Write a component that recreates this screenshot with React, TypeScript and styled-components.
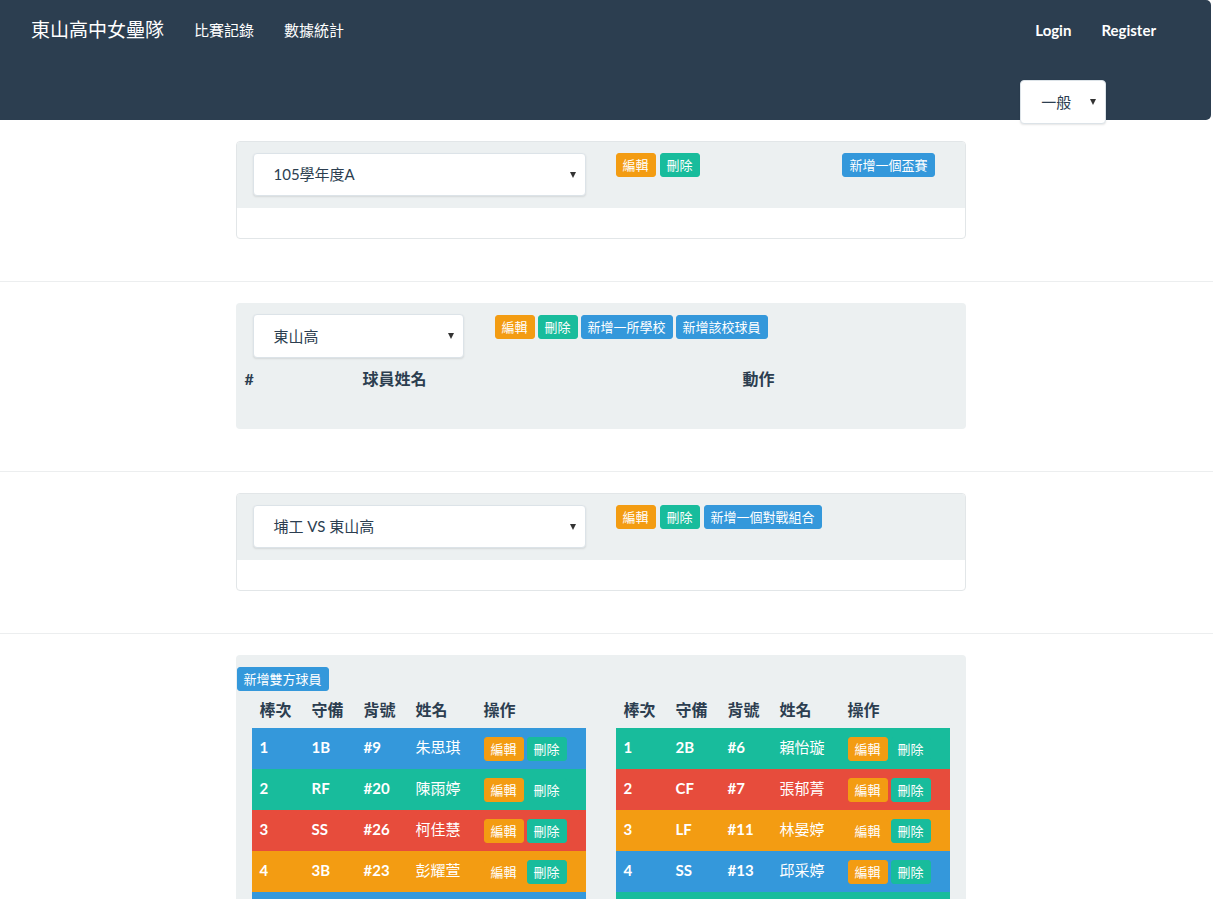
import React from "react";
import styled, { createGlobalStyle } from "styled-components";

const GlobalStyle = createGlobalStyle`
  html, body { margin: 0; padding: 0; background: #ffffff; }
  body {
    font-family: Lato, "Noto Sans CJK TC", sans-serif;
    font-size: 15px;
    line-height: 21px;
    color: #2c3e50;
  }
  * { box-sizing: border-box; }
`;

const CJK = `Lato, "Noto Sans CJK TC", sans-serif`;

const colors = {
  warning: "#f39c12",
  success: "#18bc9c",
  info: "#3498db",
  danger: "#e74c3c",
};

/* ---------- Navbar ---------- */
const Navbar = styled.nav`
  height: 120px;
  margin-right: 2px;
  background: #2c3e50;
  border-radius: 0 5px 5px 0;
  display: flex;
  justify-content: space-between;
  padding: 0 40px 0 16px;
  position: relative;
  z-index: 2;
`;

const NavLeft = styled.div`
  display: flex;
  align-items: center;
  height: 60px;
`;

const Brand = styled.a`
  padding: 0 15px;
  font-family: ${CJK};
  font-size: 19px;
  line-height: 60px;
  color: #ffffff;
  text-decoration: none;
`;

const NavLink = styled.a<{ $bold?: boolean }>`
  padding: 0 15px;
  font-family: ${CJK};
  font-size: 15px;
  line-height: 60px;
  color: #ffffff;
  text-decoration: none;
  font-weight: ${(p) => (p.$bold ? 700 : 400)};
`;

const NavRight = styled.div`
  display: flex;
  flex-direction: column;
  align-items: flex-start;
`;

const NavLinks = styled.div`
  display: flex;
  align-items: center;
  height: 60px;
`;

/* ---------- Select ---------- */
const SelectBox = styled.div<{ $w: number; $h?: number; $top?: number }>`
  width: ${(p) => p.$w}px;
  height: ${(p) => p.$h ?? 43}px;
  margin-top: ${(p) => p.$top ?? 0}px;
  flex-shrink: 0;
  background: #ffffff;
  border: 1px solid #dce3e8;
  border-radius: 4px;
  box-shadow: 0 1px 2px rgba(0, 0, 0, 0.1);
  display: flex;
  align-items: center;
  justify-content: space-between;
  padding: 0 9px 0 20px;
  font-family: ${CJK};
  font-size: 15px;
  color: #2c3e50;
`;

const Caret = styled.span`
  width: 0;
  height: 0;
  border-left: 3.5px solid transparent;
  border-right: 3.5px solid transparent;
  border-top: 6px solid #333333;
`;

/* ---------- Buttons ---------- */
const Btn = styled.button<{ $variant: keyof typeof colors }>`
  height: 24px;
  padding: 1px 6px;
  border: 1px solid ${(p) => colors[p.$variant]};
  border-radius: 3px;
  background: ${(p) => colors[p.$variant]};
  color: #ffffff;
  font-family: "Noto Sans CJK TC", sans-serif;
  font-size: 13px;
  line-height: 20px;
  white-space: nowrap;
  cursor: pointer;
`;

const BtnGroup = styled.div<{ $left: number; $top?: number; $gap?: number }>`
  display: flex;
  gap: ${(p) => p.$gap ?? 4}px;
  margin-left: ${(p) => p.$left}px;
  margin-top: ${(p) => p.$top ?? 0}px;
`;

const RightBtn = styled.div`
  margin-left: auto;
  margin-right: 14px;
`;

/* ---------- Layout ---------- */
const Main = styled.main`
  padding-top: 21px;
`;

const Container = styled.div`
  width: 730px;
  margin-left: calc(50% - 371px);
`;

const Divider = styled.hr`
  border: 0;
  border-top: 1px solid #eceeef;
  margin: 42px 0 21px;
`;

const Panel = styled.div`
  border: 1px solid #e2e6e8;
  border-radius: 4px;
  overflow: hidden;
  background: #ffffff;
`;

const PanelHeading = styled.div`
  background: #ecf0f1;
  padding: 11px 16px 12px;
  display: flex;
  align-items: flex-start;
`;

const PanelBody = styled.div`
  height: 30px;
`;

const Well = styled.div<{ $h?: number }>`
  background: #ecf0f1;
  border-radius: 4px;
  ${(p) => (p.$h ? `height: ${p.$h}px;` : "")}
  padding-top: ${(p) => (p.$h ? 11 : 12)}px;
  padding-bottom: 30px;
`;

const WellRow = styled.div`
  display: flex;
  align-items: flex-start;
  padding-left: 17px;
`;

/* ---------- Player table (school) ---------- */
const PlayerHead = styled.div`
  display: grid;
  grid-template-columns: 118px 380px 1fr;
  margin: 2px 0 0 1px;
`;

const Th = styled.div`
  padding: 8px;
  font-family: ${CJK};
  font-weight: 700;
  font-size: 16px;
  line-height: 21px;
  color: #2c3e50;
`;

/* ---------- Lineup ---------- */
const AddBoth = styled.div`
  margin-left: 1px;
`;

const TwoCol = styled.div`
  display: grid;
  grid-template-columns: 1fr 1fr;
  gap: 30px;
  padding: 0 16px;
`;

const lineupCols = "52px 52px 52px 68px 1fr";

const LineupHead = styled.div`
  display: grid;
  grid-template-columns: ${lineupCols};
  height: 37px;
`;

const LineupRow = styled.div<{ $bg: keyof typeof colors }>`
  display: grid;
  grid-template-columns: ${lineupCols};
  height: 41px;
  background: ${(p) => colors[p.$bg]};
  color: #ffffff;
`;

const Td = styled.div<{ $name?: boolean }>`
  padding: 9px 8px 0;
  font-family: ${CJK};
  font-weight: ${(p) => (p.$name ? 400 : 700)};
  font-size: 15px;
  line-height: 21px;
  white-space: nowrap;
`;

const ActionCell = styled.div`
  padding: 9px 8px 0;
  display: flex;
  gap: 3px;
`;

type Player = { no: number; pos: string; num: string; name: string };

const leftPlayers: Player[] = [
  { no: 1, pos: "1B", num: "#9", name: "朱思琪" },
  { no: 2, pos: "RF", num: "#20", name: "陳雨婷" },
  { no: 3, pos: "SS", num: "#26", name: "柯佳慧" },
  { no: 4, pos: "3B", num: "#23", name: "彭耀萱" },
];

const rightPlayers: Player[] = [
  { no: 1, pos: "2B", num: "#6", name: "賴怡璇" },
  { no: 2, pos: "CF", num: "#7", name: "張郁菁" },
  { no: 3, pos: "LF", num: "#11", name: "林晏婷" },
  { no: 4, pos: "SS", num: "#13", name: "邱采婷" },
];

const leftCycle: (keyof typeof colors)[] = ["info", "success", "danger", "warning"];
const rightCycle: (keyof typeof colors)[] = ["success", "danger", "warning", "info"];

function Lineup({ players, cycle }: { players: Player[]; cycle: (keyof typeof colors)[] }) {
  return (
    <div>
      <LineupHead>
        <Th>棒次</Th>
        <Th>守備</Th>
        <Th>背號</Th>
        <Th>姓名</Th>
        <Th>操作</Th>
      </LineupHead>
      {players.map((p, i) => (
        <LineupRow key={p.no} $bg={cycle[i % cycle.length]}>
          <Td>{p.no}</Td>
          <Td>{p.pos}</Td>
          <Td>{p.num}</Td>
          <Td $name>{p.name}</Td>
          <ActionCell>
            <Btn $variant="warning">編輯</Btn>
            <Btn $variant="success">刪除</Btn>
          </ActionCell>
        </LineupRow>
      ))}
      <LineupRow $bg={cycle[players.length % cycle.length]} />
    </div>
  );
}

export default function App() {
  return (
    <>
      <GlobalStyle />
      <Navbar>
        <NavLeft>
          <Brand>東山高中女壘隊</Brand>
          <NavLink>比賽記錄</NavLink>
          <NavLink>數據統計</NavLink>
        </NavLeft>
        <NavRight>
          <NavLinks>
            <NavLink $bold>Login</NavLink>
            <NavLink $bold>Register</NavLink>
          </NavLinks>
          <SelectBox $w={86} $h={44} $top={20}>
            一般
            <Caret />
          </SelectBox>
        </NavRight>
      </Navbar>

      <Main>
        <Container>
          <Panel>
            <PanelHeading>
              <SelectBox $w={333}>
                105學年度A
                <Caret />
              </SelectBox>
              <BtnGroup $left={30}>
                <Btn $variant="warning">編輯</Btn>
                <Btn $variant="success">刪除</Btn>
              </BtnGroup>
              <RightBtn>
                <Btn $variant="info">新增一個盃賽</Btn>
              </RightBtn>
            </PanelHeading>
            <PanelBody />
          </Panel>
        </Container>

        <Divider />

        <Container>
          <Well $h={126}>
            <WellRow>
              <SelectBox $w={211} $h={44}>
                東山高
                <Caret />
              </SelectBox>
              <BtnGroup $left={31} $top={1} $gap={3}>
                <Btn $variant="warning">編輯</Btn>
                <Btn $variant="success">刪除</Btn>
                <Btn $variant="info">新增一所學校</Btn>
                <Btn $variant="info">新增該校球員</Btn>
              </BtnGroup>
            </WellRow>
            <PlayerHead>
              <Th>#</Th>
              <Th>球員姓名</Th>
              <Th>動作</Th>
            </PlayerHead>
          </Well>
        </Container>

        <Divider />

        <Container>
          <Panel>
            <PanelHeading>
              <SelectBox $w={333}>
                埔工 VS 東山高
                <Caret />
              </SelectBox>
              <BtnGroup $left={30}>
                <Btn $variant="warning">編輯</Btn>
                <Btn $variant="success">刪除</Btn>
                <Btn $variant="info">新增一個對戰組合</Btn>
              </BtnGroup>
            </PanelHeading>
            <PanelBody />
          </Panel>
        </Container>

        <Divider />

        <Container>
          <Well>
            <AddBoth>
              <Btn $variant="info">新增雙方球員</Btn>
            </AddBoth>
            <TwoCol>
              <Lineup players={leftPlayers} cycle={leftCycle} />
              <Lineup players={rightPlayers} cycle={rightCycle} />
            </TwoCol>
          </Well>
        </Container>
      </Main>
    </>
  );
}
